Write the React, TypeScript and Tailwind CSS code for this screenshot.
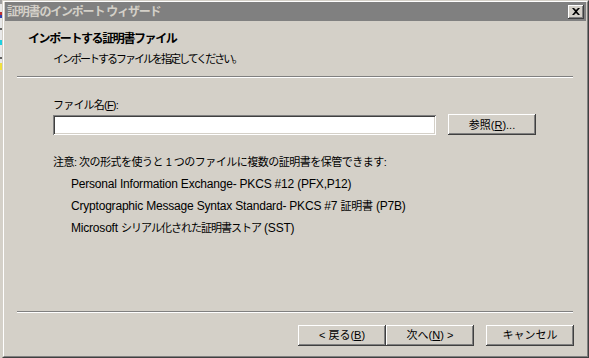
import React from "react"

const font = { fontFamily: '"Liberation Sans", "Noto Sans CJK JP", sans-serif' }

function Btn({ children, className = "" }: { children: React.ReactNode; className?: string }) {
  return (
    <button
      className={
        "h-[21px] w-[88px] flex items-center justify-center text-[11px] text-black bg-[#d4d0c8] shadow-[inset_-1px_-1px_#404040,inset_1px_1px_#ffffff,inset_-2px_-2px_#808080] " +
        className
      }
    >
      {children}
    </button>
  )
}

function Separator() {
  return (
    <div className="ml-[12px] mr-[13px] flex flex-col">
      <div className="h-px bg-[#808080]" />
      <div className="h-px bg-white" />
    </div>
  )
}

export default function App() {
  return (
    <div className="w-[589px] h-[358px] overflow-hidden flex bg-white" style={font}>
      {/* edge of the window behind */}
      <div className="w-[2px] flex flex-col bg-[#e8e8e8]">
        <div className="h-[4px] bg-[#a0a0a0]" />
        <div className="h-[8px]" />
        <div className="h-[3px] bg-[#c03030]" />
        <div className="h-[3px] bg-[#3040b0]" />
        <div className="h-[10px]" />
        <div className="h-[2px] bg-[#606060]" />
        <div className="h-[10px]" />
        <div className="h-[5px] bg-[#20d0e0]" />
        <div className="h-[12px]" />
        <div className="h-[2px] bg-[#606060]" />
        <div className="h-[4px]" />
        <div className="h-[7px] bg-[#f0e040]" />
        <div className="flex-1 bg-[#d4d0c8]" />
      </div>

      {/* window */}
      <div className="flex-1 border-t border-l border-t-[#d4d0c8] border-l-[#d4d0c8] border-r border-b border-r-[#404040] border-b-[#404040]">
        <div className="h-full border-t border-l border-white border-r border-b border-r-[#808080] border-b-[#808080] bg-[#d4d0c8] px-px pb-px flex flex-col">
          {/* title bar */}
          <div className="h-[19px] bg-[#808080] flex items-center pl-[2px] pr-[2px]">
            <span className="text-[12px] font-bold text-[#d4d0c8] tracking-[-1.2px] leading-none">
              証明書のインポート ウィザード
            </span>
            <div className="ml-auto w-[16px] h-[14px] bg-[#d4d0c8] shadow-[inset_-1px_-1px_#404040,inset_1px_1px_#ffffff,inset_-2px_-2px_#808080] flex items-center justify-center">
              <svg width="8" height="7" viewBox="0 0 8 7">
                <path d="M0 0h2l2 2 2-2h2L5 3.5 8 7H6L4 5 2 7H0l3-3.5z" fill="#000" />
              </svg>
            </div>
          </div>

          {/* header */}
          <div className="pt-[10px] pl-[23px] flex flex-col">
            <div className="text-[12px] font-bold leading-[16px] text-black tracking-[-1.4px]">
              インポートする証明書ファイル
            </div>
            <div className="mt-[4px] pl-[25px] text-[11px] leading-[16px] text-black tracking-[-2px]">
              インポートするファイルを指定してください。
            </div>
          </div>
          <div className="mt-[9px]">
            <Separator />
          </div>

          {/* body */}
          <div className="flex-1 pl-[48px] pt-[19px] text-[11px] text-black leading-[16px]">
            <div className="tracking-[-0.8px]">
              ファイル名(<span className="underline">F</span>):
            </div>
            <div className="mt-px flex items-center">
              <div className="w-[383px] h-[20px] bg-white shadow-[inset_1px_1px_#808080,inset_-1px_-1px_#ffffff,inset_2px_2px_#404040,inset_-2px_-2px_#d4d0c8]" />
              <Btn className="ml-[12px] h-[20px]">
                参照(<span className="underline">R</span>)...
              </Btn>
            </div>
            <div className="mt-[19px] tracking-[-0.5px]">
              注意: 次の形式を使うと 1 つのファイルに複数の証明書を保管できます:
            </div>
            <div className="pl-[18px] mt-[6px] flex flex-col gap-[6px] text-[12px] tracking-[-0.2px]">
              <div>Personal Information Exchange- PKCS #12 (PFX,P12)</div>
              <div>
                Cryptographic Message Syntax Standard- PKCS #7 <span className="text-[11px]">証明書</span> (P7B)
              </div>
              <div>
                Microsoft <span className="text-[11px] tracking-[-1px]">シリアル化された証明書ストア</span> (SST)
              </div>
            </div>
          </div>

          {/* footer */}
          <Separator />
          <div className="flex justify-end pr-[12px] pt-[12px] pb-[9px]">
            <Btn>
              &lt; 戻る(<span className="underline">B</span>)
            </Btn>
            <Btn>
              次へ(<span className="underline">N</span>) &gt;
            </Btn>
            <Btn className="ml-[12px]">キャンセル</Btn>
          </div>
        </div>
      </div>
    </div>
  )
}
